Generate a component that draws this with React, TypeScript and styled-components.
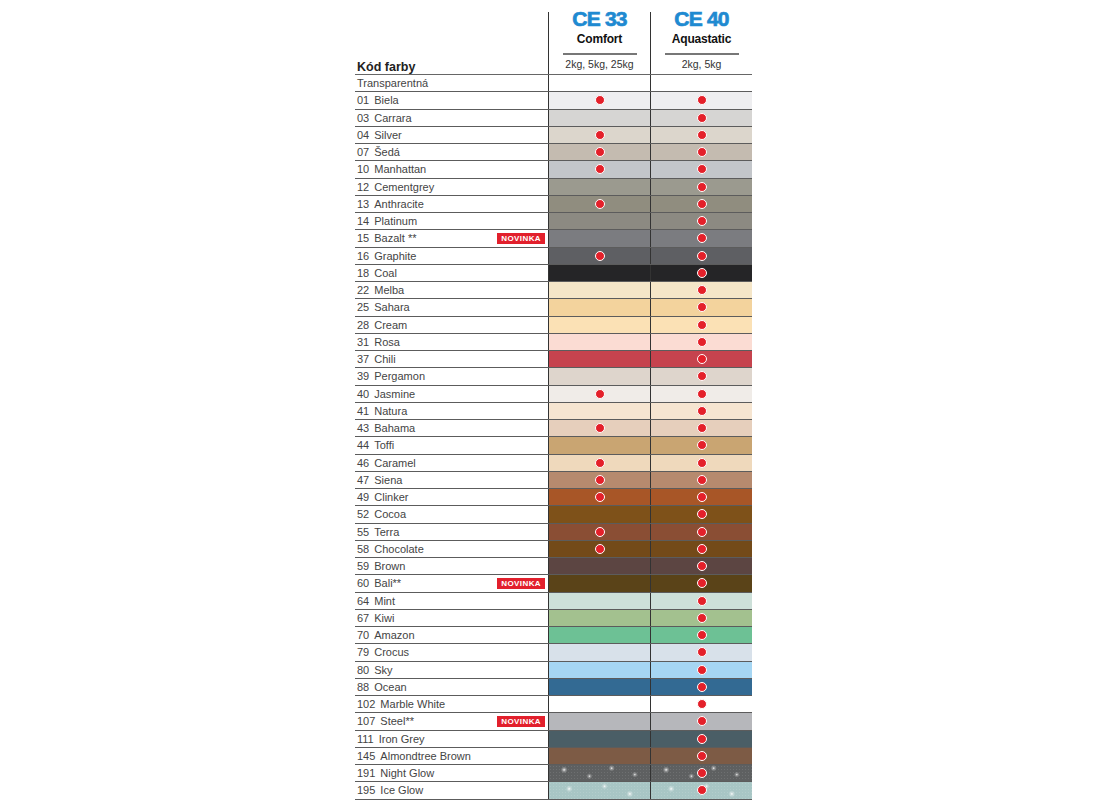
import React from "react";
import { createGlobalStyle, styled } from "styled-components";

const GlobalStyle = createGlobalStyle`
  html, body {
    margin: 0;
    padding: 0;
    background: #ffffff;
    overflow: hidden;
  }
  body {
    font-family: "Liberation Sans", Arial, sans-serif;
  }
`;

const ROW_H = 17.25;
const COLS = "193px 102px 102px";

const Page = styled.div`
  padding-left: 355px;
`;

const Table = styled.div`
  width: 397px;
  display: flex;
  flex-direction: column;
`;

const HeaderRow = styled.div`
  display: grid;
  grid-template-columns: ${COLS};
  height: 75px;
  box-sizing: border-box;
  border-bottom: 1.5px solid #666;
`;

const CodeHead = styled.div`
  display: flex;
  align-items: flex-end;
  padding: 0 0 0 2px;
  font-size: 12.5px;
  font-weight: 700;
  color: #222;
`;

const ProductHead = styled.div`
  margin-top: 12px;
  border-left: 1.5px solid #333;
  display: flex;
  flex-direction: column;
  align-items: center;
`;

const ProductCode = styled.div`
  margin-top: -4px;
  font-size: 21px;
  line-height: 22px;
  font-weight: 700;
  letter-spacing: -0.8px;
  color: #1f8ad1;
  -webkit-text-stroke: 0.7px #1f8ad1;
`;

const ProductName = styled.div`
  margin-top: 3px;
  font-size: 12px;
  line-height: 13px;
  font-weight: 700;
  color: #111;
  letter-spacing: -0.2px;
`;

const Rule = styled.div`
  margin-top: 7px;
  width: 74px;
  height: 1.5px;
  background: #777;
`;

const Sizes = styled.div`
  margin-top: 4px;
  font-size: 10.5px;
  line-height: 11px;
  color: #333;
`;

const Row = styled.div`
  display: grid;
  grid-template-columns: ${COLS};
  height: ${ROW_H}px;
  box-sizing: border-box;
  border-bottom: 1.5px solid #5c5c5c;
`;

const NameCell = styled.div`
  display: flex;
  align-items: center;
  gap: 5px;
  padding-left: 2px;
  padding-right: 3px;
  font-size: 11px;
  color: #444;
  white-space: nowrap;
`;

const Badge = styled.span`
  margin-left: auto;
  height: 11px;
  padding: 0 4px;
  display: flex;
  align-items: center;
  background: #e2202c;
  color: #fff;
  font-size: 8px;
  font-weight: 700;
  letter-spacing: 0.4px;
`;

const Swatch = styled.div<{ $bg: string }>`
  border-left: 1.5px solid #333;
  background: ${({ $bg }) => $bg};
  display: flex;
  align-items: center;
  justify-content: center;
`;

const Dot = styled.span`
  width: 8px;
  height: 8px;
  border-radius: 50%;
  background: #e4202a;
  border: 1.5px solid #fff;
`;

const sparkle = (x: number, y: number, r: number) =>
  `radial-gradient(circle at ${x}% ${y}%, rgba(255,255,255,0.95) 0, rgba(255,255,255,0.35) ${r}px, transparent ${r + 2}px)`;

const nightGlow = [
  sparkle(15, 30, 1.5),
  sparkle(40, 70, 1),
  sparkle(62, 20, 1.2),
  sparkle(85, 60, 1),
  "radial-gradient(circle, rgba(255,255,255,0.1) 0.5px, transparent 0.8px) 0 0 / 3px 3px",
  "#5e6061",
].join(", ");

const iceGlow = [
  sparkle(20, 40, 1.5),
  sparkle(55, 25, 1.2),
  sparkle(80, 70, 1.5),
  "radial-gradient(circle, rgba(255,255,255,0.12) 0.5px, transparent 0.8px) 0 0 / 3px 3px",
  "#a8c6c5",
].join(", ");

type Shade = {
  code: string;
  name: string;
  bg: string;
  ce33?: boolean;
  ce40?: boolean;
  novinka?: boolean;
};

const shades: Shade[] = [
  { code: "", name: "Transparentná", bg: "#ffffff", ce40: false },
  { code: "01", name: "Biela", bg: "#eeeef0", ce33: true },
  { code: "03", name: "Carrara", bg: "#d6d5d3" },
  { code: "04", name: "Silver", bg: "#dcd6cc", ce33: true },
  { code: "07", name: "Šedá", bg: "#c4bbb0", ce33: true },
  { code: "10", name: "Manhattan", bg: "#c3c6ca", ce33: true },
  { code: "12", name: "Cementgrey", bg: "#9b9a8f" },
  { code: "13", name: "Anthracite", bg: "#908d7f", ce33: true },
  { code: "14", name: "Platinum", bg: "#8c8a82" },
  { code: "15", name: "Bazalt **", bg: "#7b7c80", novinka: true },
  { code: "16", name: "Graphite", bg: "#5e5f63", ce33: true },
  { code: "18", name: "Coal", bg: "#252527" },
  { code: "22", name: "Melba", bg: "#f5e6c8" },
  { code: "25", name: "Sahara", bg: "#f3d39d" },
  { code: "28", name: "Cream", bg: "#fbe1b5" },
  { code: "31", name: "Rosa", bg: "#fbdcd3" },
  { code: "37", name: "Chili", bg: "#c6434e" },
  { code: "39", name: "Pergamon", bg: "#ded5cc" },
  { code: "40", name: "Jasmine", bg: "#f0ece8", ce33: true },
  { code: "41", name: "Natura", bg: "#f6e5d1" },
  { code: "43", name: "Bahama", bg: "#e6cfbc", ce33: true },
  { code: "44", name: "Toffi", bg: "#c9a572" },
  { code: "46", name: "Caramel", bg: "#efd9bc", ce33: true },
  { code: "47", name: "Siena", bg: "#b68a6e", ce33: true },
  { code: "49", name: "Clinker", bg: "#a85627", ce33: true },
  { code: "52", name: "Cocoa", bg: "#7e5119" },
  { code: "55", name: "Terra", bg: "#8a4e34", ce33: true },
  { code: "58", name: "Chocolate", bg: "#734a19", ce33: true },
  { code: "59", name: "Brown", bg: "#5c4542" },
  { code: "60", name: "Bali**", bg: "#5a4318", novinka: true },
  { code: "64", name: "Mint", bg: "#cde0d9" },
  { code: "67", name: "Kiwi", bg: "#a3c18f" },
  { code: "70", name: "Amazon", bg: "#6dc195" },
  { code: "79", name: "Crocus", bg: "#d8e1ea" },
  { code: "80", name: "Sky", bg: "#a6d6f3" },
  { code: "88", name: "Ocean", bg: "#336a93" },
  { code: "102", name: "Marble White", bg: "#ffffff" },
  { code: "107", name: "Steel**", bg: "#b6b7bb", novinka: true },
  { code: "111", name: "Iron Grey", bg: "#4a5e66" },
  { code: "145", name: "Almondtree Brown", bg: "#7d5b45" },
  { code: "191", name: "Night Glow", bg: nightGlow },
  { code: "195", name: "Ice Glow", bg: iceGlow },
];

const products = [
  { code: "CE 33", name: "Comfort", sizes: "2kg, 5kg, 25kg" },
  { code: "CE 40", name: "Aquastatic", sizes: "2kg, 5kg" },
];

export default function App() {
  return (
    <Page>
      <GlobalStyle />
      <Table>
        <HeaderRow>
          <CodeHead>Kód farby</CodeHead>
          {products.map((p) => (
            <ProductHead key={p.code}>
              <ProductCode>{p.code}</ProductCode>
              <ProductName>{p.name}</ProductName>
              <Rule />
              <Sizes>{p.sizes}</Sizes>
            </ProductHead>
          ))}
        </HeaderRow>
        {shades.map((s) => (
          <Row key={s.code + s.name}>
            <NameCell>
              {s.code && <span>{s.code}</span>}
              <span>{s.name}</span>
              {s.novinka && <Badge>NOVINKA</Badge>}
            </NameCell>
            <Swatch $bg={s.bg}>{s.ce33 && <Dot />}</Swatch>
            <Swatch $bg={s.bg}>{s.ce40 !== false && <Dot />}</Swatch>
          </Row>
        ))}
      </Table>
    </Page>
  );
}
